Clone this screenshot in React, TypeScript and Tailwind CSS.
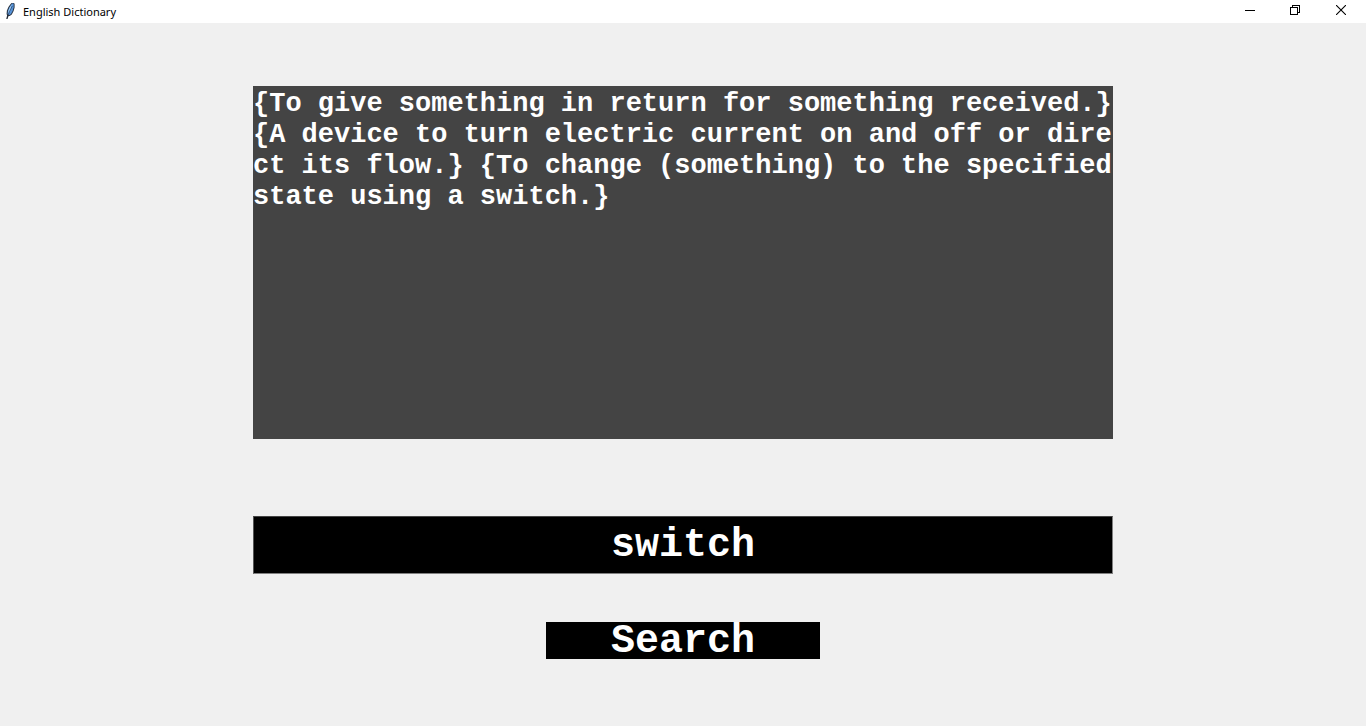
import { useState } from "react";

const definition =
  "{To give something in return for something received.} {A device to turn electric current on and off or direct its flow.} {To change (something) to the specified state using a switch.}";

function FeatherIcon() {
  return (
    <svg width="16" height="16" viewBox="0 0 16 16" aria-hidden="true">
      <path d="M8.500 0H11l.6 1v3.500l-1 3.500-1.800 3.500L6.700 13H5.500l-1 3H3.300l.8-3.500-.5-1.500.3-3.500L5.400 4l1.800-2.500z" fill="#2a3442" />
      <path d="M9 .6h1.600v3.600l-.9 3.500-1.700 3.300-1.500 1H5.200l-.6-1.500.4-3L6.400 4.500 8 2z" fill="#5592d8" />
      <path d="M8.900 1.300 6.700 4.500 5.400 8v2.500L7.400 7z" fill="#9ccaf5" />
      <path d="M9.300 3 6.500 8.500 4 15.500" fill="none" stroke="#141b26" strokeWidth=".5" />
    </svg>
  );
}

function TitleBar() {
  return (
    <header className="flex h-[23px] items-center justify-between bg-white">
      <div className="flex items-center gap-1 pl-[3px]">
        <span className="pb-[2px]">
          <FeatherIcon />
        </span>
        <h1 className="font-['Noto_Sans',sans-serif] text-[11px] leading-4 text-black">English Dictionary</h1>
      </div>
      <div className="flex h-full pr-[2px] pb-[3px] text-black">
        <button type="button" aria-label="Minimize" className="flex w-[45px] items-center justify-center">
          <svg width="10" height="10" viewBox="0 0 10 10" shapeRendering="crispEdges">
            <path d="M0 5h10v1H0z" fill="currentColor" />
          </svg>
        </button>
        <button type="button" aria-label="Restore" className="flex w-[46px] items-center justify-center">
          <svg width="10" height="10" viewBox="0 0 10 10" fill="none" stroke="currentColor" shapeRendering="crispEdges">
            <path d="M.5 2.500h7v7h-7zM2.500 2.500v-2h7v7h-2" />
          </svg>
        </button>
        <button type="button" aria-label="Close" className="flex w-[46px] items-center justify-center">
          <svg width="10" height="10" viewBox="0 0 10 10" fill="none" stroke="currentColor" strokeWidth="1.100">
            <path d="M0 0l10 10M10 0L0 10" />
          </svg>
        </button>
      </div>
    </header>
  );
}

export default function App() {
  const [word, setWord] = useState("switch");

  return (
    <div className="flex min-h-screen flex-col bg-[#f0f0f0]">
      <TitleBar />
      <main className="flex grow flex-col items-center px-4 pt-[63px] pb-16 font-['Liberation_Mono','Courier_New',monospace] font-bold">
        <textarea
          aria-label="Definition"
          readOnly
          rows={11}
          value={definition}
          className="block w-full max-w-[860px] resize-none overflow-hidden bg-[#444444] pt-[3px] pb-[9px] text-[27px] leading-[31px] break-all whitespace-pre-wrap text-white outline-none"
        />
        <form className="mt-[77px] flex w-full max-w-[860px] flex-col items-center gap-12" onSubmit={(e) => e.preventDefault()}>
          <input
            type="text"
            aria-label="Word"
            value={word}
            onChange={(e) => setWord(e.target.value)}
            className="h-[58px] w-full border border-t-[#444444] border-r-[#808080] border-b-[#808080] border-l-[#555555] bg-black text-center text-[40px] leading-[46px] text-white outline-none"
          />
          <button type="submit" className="flex h-[37px] w-[274px] items-center justify-center bg-black pt-[2px] text-[40px] leading-[37px] text-white">
            Search
          </button>
        </form>
      </main>
    </div>
  );
}
